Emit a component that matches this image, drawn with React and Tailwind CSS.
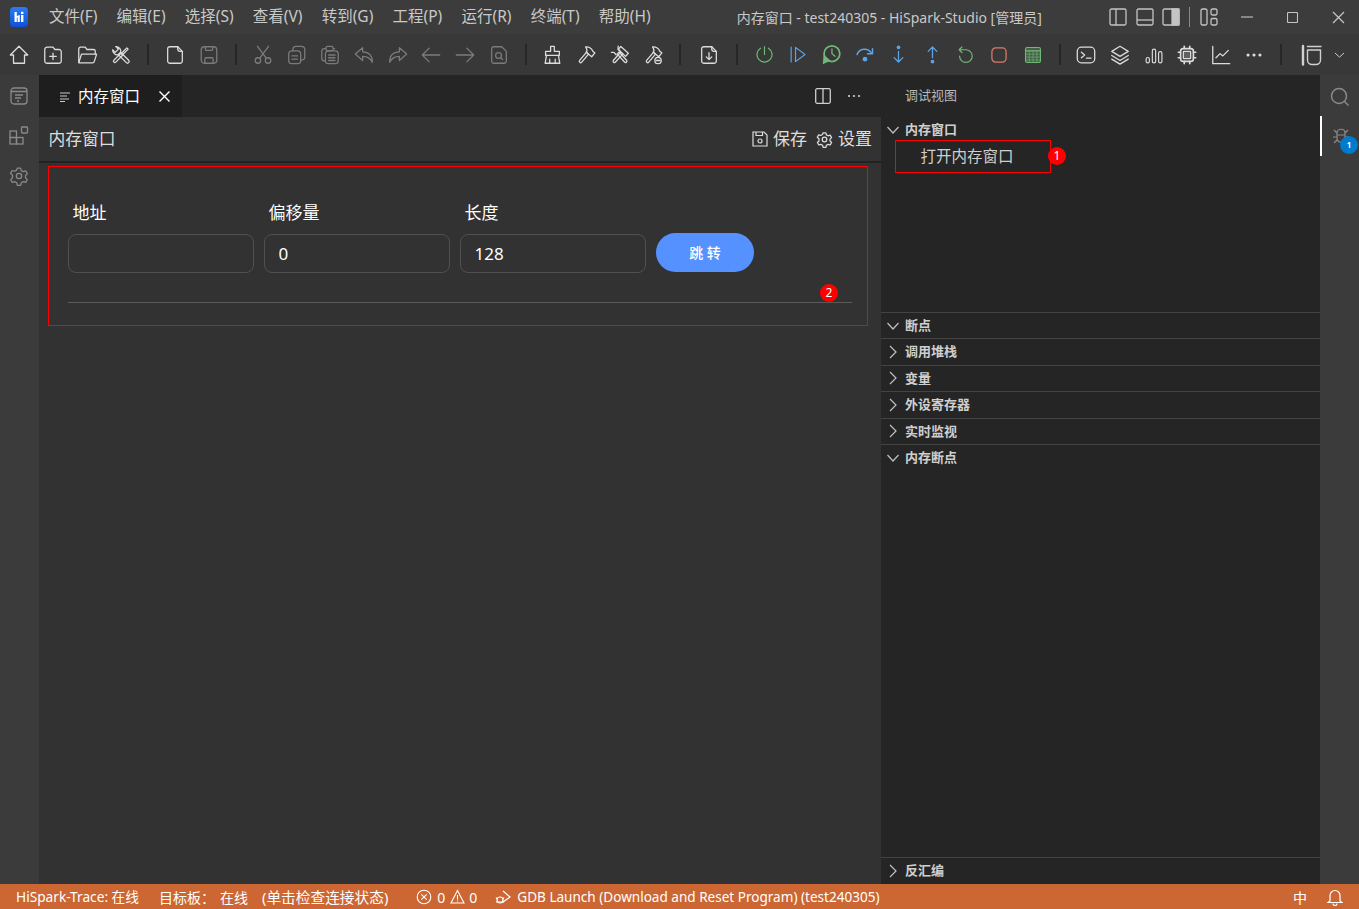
import React from "react";

const W = "#dcdcdc", D = "#7b7b7b", G = "#71b877", B = "#5aa5ea", R = "#dd7a66";

function S({ c = W, s = 22, w = 1.4, children }) {
  return (
    <svg width={s} height={s} viewBox="0 0 24 24" fill="none" stroke={c} strokeWidth={w} strokeLinecap="round" strokeLinejoin="round">
      {children}
    </svg>
  );
}

const Doc = () => <path d="M6.5 3H15l5 5v10.5a2.5 2.5 0 0 1-2.5 2.5h-11A2.5 2.5 0 0 1 4 18.500v-13A2.500 2.500 0 0 1 6.500 3z" />;

const hammer = (
  <g transform="rotate(40 12 12)">
    <path d="M10.500 9.500h3V21a1.500 1.500 0 0 1-3 0z" />
    <path d="M6 5.500c2-2.500 6-3 9-1.500h3v5.500h-8V8C9 6.500 7.500 6 6 5.500z" />
  </g>
);

const icons = {
  home: c => <S c={c}><path d="M12 2.500 21.500 12H18v9H6v-9H2.500z" /></S>,
  newFolder: c => <S c={c}><path d="M6 3.500h6l2 2.500h4.500A2.500 2.500 0 0 1 21 8.500v10a2.500 2.500 0 0 1-2.500 2.500h-13A2.500 2.500 0 0 1 3 18.500V6a2.500 2.500 0 0 1 3-2.500z" /><path d="M12 10v7M8.500 13.500h7" /></S>,
  folder: c => <S c={c}><path d="M3 20V5.500A2 2 0 0 1 5 3.500h5l2 2.500h7a2 2 0 0 1 2 2V11" /><path d="M3 20.500 6 11h16.500l-2.500 8a2 2 0 0 1-2 1.500z" /></S>,
  tools: c => <S c={c}>
    <g transform="rotate(-45 12 12)"><path d="M10.200 9.500h3.600V22a1.800 1.800 0 0 1-3.600 0z" /><path d="M10.200 9.500C7.500 8.500 7 4 9.500 1.500v4h5v-4C17 4 16.500 8.500 13.800 9.500" /></g>
    <g transform="rotate(45 12 12)"><path d="M10.500 11h3v10.500a1.500 1.500 0 0 1-3 0z" /><path d="M11 11V2h2v9" /></g>
  </S>,
  file: c => <S c={c}><Doc /><path d="M15 3v2.500A2.500 2.500 0 0 0 17.500 8H20" /></S>,
  save: c => <S c={c}><rect x="3.500" y="3" width="17" height="18" rx="3.500" /><path d="M8 3v2.500A1.500 1.500 0 0 0 9.500 7h5A1.500 1.500 0 0 0 16 5.500V3M7.500 21v-4.500a1.500 1.500 0 0 1 1.500-1.500h6a1.500 1.500 0 0 1 1.500 1.500V21" /></S>,
  cut: c => <S c={c}><circle cx="6.500" cy="18" r="3" /><circle cx="17.500" cy="18" r="3" /><path d="M8.500 15.500 18 2.500M15.500 15.500 6 2.500" /></S>,
  copy: c => <S c={c}><rect x="3" y="7.500" width="13" height="14" rx="3.500" /><path d="M7.500 7.500V6A3.500 3.500 0 0 1 11 2.500h6A3.500 3.500 0 0 1 20.500 6v8a3.500 3.500 0 0 1-3.500 3.500h-1M6.500 13h6M6.500 16.500h6" /></S>,
  paste: c => <S c={c}><path d="M6 18.500A3 3 0 0 1 3 15.500V8a3 3 0 0 1 3-3h1.500M16 5h1" /><rect x="7.500" y="2.500" width="8" height="5" rx="2" /><rect x="7" y="7.500" width="14" height="14" rx="3.500" /><path d="M10.500 12h7M10.500 15h7M10.500 18h7" /></S>,
  undo: c => <S c={c}><path d="M10.500 4 2.500 11l8 7v-4.500c5 0 8.500 2 10.500 6.500.5-7-3.500-11.500-10.500-11.500z" /></S>,
  redo: c => <S c={c}><path d="M13.500 4 21.500 11l-8 7v-4.500c-5 0-8.500 2-10.500 6.500-.5-7 3.500-11.500 10.500-11.500z" /></S>,
  left: c => <S c={c}><path d="M21.500 12h-19M10 4.500 2.500 12l7.500 7.500" /></S>,
  right: c => <S c={c}><path d="M2.500 12h19M14 4.500l7.500 7.500-7.500 7.500" /></S>,
  find: c => <S c={c}><Doc /><circle cx="11.500" cy="12.500" r="3.200" /><path d="m14 15 2 2" /></S>,
  broom: c => <S c={c}><path d="M10.500 2.500h4V8H20v4.500H5V8h5.500z" /><path d="M6 12.500 4.500 21h16L19 12.500M9.500 21v-4.500M15.500 21v-4.500" /></S>,
  hammer: c => <S c={c}>{hammer}</S>,
  hammerWrench: c => <S c={c}>
    <g transform="rotate(-42 12 12)"><path d="M10.500 9h3v12a1.500 1.500 0 0 1-3 0z" /><path d="M9 9V5.500L7 3.500M15 9V5.500l2-2" /></g>
    <g transform="rotate(42 12 12)"><path d="M10.500 9h3v12a1.500 1.500 0 0 1-3 0z" /><path d="M6.500 4.500h11v4.500h-11z" /></g>
  </S>,
  hammerMinus: c => <S c={c}>{hammer}<circle cx="17.500" cy="18" r="3.500" fill="#383838" /><path d="M15.500 18h4" /></S>,
  download: c => <S c={c}><Doc /><path d="M15 3v2.500A2.500 2.500 0 0 0 17.500 8H20M12 9.500v7.500M9 14l3 3 3-3" /></S>,
  power: c => <S c={c} s={19} w={1.500}><path d="M12 2V12M7 4a9.500 9.500 0 1 0 10 0" /></S>,
  cont: c => <S c={c} s={19} w={1.500}><path d="M4 2.500v19M9.500 3 21.500 12 9.500 21z" /></S>,
  clock: c => <S c={c} s={21} w={2}><circle cx="12.500" cy="11" r="9" /><path d="M12.500 5.500V11l3.500 3" strokeWidth="1.500" /><path d="M2 23l1-11 8 7z" fill={c} stroke="none" /></S>,
  over: c => <S c={c} s={20} w={1.800}><path d="M2.500 11.500a9.500 9.500 0 0 1 17-2" /><path d="M21 4.500v6h-6" /><circle cx="12" cy="17" r="2.800" fill={c} stroke="none" /></S>,
  into: c => <S c={c} s={19} w={1.600}><circle cx="12" cy="3" r="2.300" fill={c} stroke="none" /><path d="M12 8v13.500M6.500 16l5.500 5.500 5.500-5.500" /></S>,
  out: c => <S c={c} s={19} w={1.600}><circle cx="12" cy="21" r="2.300" fill={c} stroke="none" /><path d="M12 16V2.500M6.500 8 12 2.500 17.500 8" /></S>,
  restart: c => <S c={c} s={19} w={1.500}><path d="M7.500 2.500 4 6l3.500 3.500M4 6h8.500a8 8 0 1 1-8 8" /></S>,
  stop: c => <S c={c} s={20} w={1.500}><rect x="3.500" y="3.500" width="17" height="17" rx="4.500" /></S>,
  calc: c => <S c={c} s={20} w={1.300}><rect x="3" y="3" width="18" height="18" rx="2" fill="#46604a" /><path d="M3 7h18" strokeWidth="1.600" /><path d="M3 11h18M3 14.500h18M3 18h18M7.500 7.500V21M12 7.500V21M16.500 7.500V21" strokeWidth="0.700" /></S>,
  term: c => <S c={c}><rect x="2.500" y="3.500" width="19" height="17" rx="4.500" /><path d="m7 9 3.500 3L7 15M12.500 15.500h5" /></S>,
  layers: c => <S c={c}><path d="M12 2.500 21 8l-9 5.500L3 8zM3 12.500l9 5.500 9-5.500M3 16.500l9 5.500 9-5.500" /></S>,
  bars: c => <S c={c} s={20}><rect x="2.500" y="15" width="4" height="6.500" rx="2" /><rect x="10" y="5" width="4" height="16.500" rx="2" /><rect x="17.500" y="8" width="4" height="13.500" rx="2" /></S>,
  chip: c => <S c={c}><rect x="5" y="5" width="14" height="14" rx="3" strokeWidth="1.800" /><rect x="8" y="8" width="8" height="8" rx="0.500" fill={c} fillOpacity="0.250" /><path d="M9 2.500V5M15 2.500V5M9 19v2.500M15 19v2.500M2.500 9H5M2.500 15H5M19 9h2.500M19 15h2.500" strokeWidth="1.800" /></S>,
  chart: c => <S c={c}><path d="M3 2.500V21.500H21.500" /><path d="m6.500 15 4.500-4.500 3 2.500 6-6" /></S>,
  dots: c => <S c={c}><g fill={c} stroke="none"><circle cx="5.500" cy="12" r="1.700" /><circle cx="12" cy="12" r="1.700" /><circle cx="18.500" cy="12" r="1.700" /></g></S>,
  panel: c => <S c={c} s={24}><path d="M4 3v18.500" strokeWidth="2.400" /><path d="M8.500 3.500H22M8.500 7h13v10a4.500 4.500 0 0 1-4.500 4.500h-4A4.500 4.500 0 0 1 8.500 17z" /></S>,
  chev: c => <S c={c} s={20}><path d="m6 9.500 6 5.500 6-5.500" /></S>,
};

const groups = [
  { w: "w-[34px]", items: [["home", W], ["newFolder", W], ["folder", W], ["tools", W]] },
  { w: "w-[34px]", items: [["file", W], ["save", D]] },
  { w: "w-[33.7px]", items: [["cut", D], ["copy", D], ["paste", D], ["undo", D], ["redo", D], ["left", D], ["right", D], ["find", D]] },
  { w: "w-[33.7px]", items: [["broom", W], ["hammer", W], ["hammerWrench", W], ["hammerMinus", W]] },
  { w: "w-[37px]", items: [["download", W]] },
  { w: "w-[33.6px]", items: [["power", G], ["cont", B], ["clock", G], ["over", B], ["into", B], ["out", B], ["restart", G], ["stop", R], ["calc", G]] },
  { w: "w-[33.6px]", items: [["term", W], ["layers", W], ["bars", W], ["chip", W], ["chart", W], ["dots", W]] },
];

const menus = ["文件(F)", "编辑(E)", "选择(S)", "查看(V)", "转到(G)", "工程(P)", "运行(R)", "终端(T)", "帮助(H)"];

function Toolbar() {
  return (
    <div className="flex h-[41px] items-center bg-[#383838] pl-[2px]">
      {groups.map((g, i) => (
        <React.Fragment key={i}>
          {g.items.map(([n, c], j) => (
            <div key={j} className={`flex shrink-0 items-center justify-center ${g.w}`}>{icons[n](c)}</div>
          ))}
          <div className="flex w-[20px] shrink-0 justify-center"><div className="h-[21px] w-[2px] bg-[#262626]" /></div>
        </React.Fragment>
      ))}
      <div className="flex w-[40px] shrink-0 justify-center">{icons.panel("#d0d0d0")}</div>
      <div className="flex w-[17px] shrink-0 justify-center">{icons.chev("#d0d0d0")}</div>
    </div>
  );
}

function TitleBar() {
  return (
    <div className="flex h-[34px] items-center bg-[#3c3c3c] text-[#c9c9c9]">
      <svg className="ml-[10px] shrink-0" width="18" height="20" viewBox="0 0 18 20">
        <defs>
          <linearGradient id="lg" x1="0" y1="0" x2="0" y2="1">
            <stop offset="0" stopColor="#2b7cf2" />
            <stop offset="1" stopColor="#0f4fd8" />
          </linearGradient>
        </defs>
        <rect width="18" height="20" rx="4" fill="url(#lg)" />
        <path d="M4.500 5h2.300v4l3-1v-3h0v10h-2.200v-4.500l-.8.3V15H4.500z" fill="#fff" />
        <rect x="11" y="8" width="2.400" height="7" fill="#fff" />
        <rect x="11" y="4.800" width="2.400" height="2.200" fill="#fff" />
      </svg>
      <div className="ml-[21px] flex gap-[19.250px] text-[15.500px]">
        {menus.map(m => <span key={m} className="whitespace-nowrap">{m}</span>)}
      </div>
      <div className="ml-[86px] whitespace-nowrap text-[14px]">内存窗口 - test240305 - HiSpark-Studio [管理员]</div>
      <div className="ml-auto flex items-center text-[#c4c4c4]">
        <svg width="18" height="18" viewBox="0 0 18 18" fill="none" stroke="currentColor" strokeWidth="1.300"><rect x="1" y="1" width="16" height="16" rx="1.500" /><path d="M7 1v16" /></svg>
        <svg className="ml-[9px]" width="18" height="18" viewBox="0 0 18 18" fill="none" stroke="currentColor" strokeWidth="1.300"><rect x="1" y="1" width="16" height="16" rx="1.500" /><path d="M1 12h16" /></svg>
        <svg className="ml-[8px]" width="18" height="18" viewBox="0 0 18 18" fill="none" stroke="currentColor" strokeWidth="1.300"><rect x="1" y="1" width="16" height="16" rx="1.500" /><rect x="10" y="1" width="7" height="16" fill="currentColor" /></svg>
        <div className="ml-[9px] h-[20px] w-px bg-[#8a8a8a]" />
        <svg className="ml-[10px]" width="18" height="18" viewBox="0 0 18 18" fill="none" stroke="currentColor" strokeWidth="1.300"><rect x="1" y="1" width="6" height="16" rx="1.500" /><rect x="11" y="1" width="6" height="6" rx="1.500" /><rect x="11" y="10.500" width="6" height="6.500" rx="1.500" /></svg>
        <svg className="ml-[23px]" width="12" height="12" viewBox="0 0 12 12" stroke="currentColor" strokeWidth="1.100"><path d="M0 6h12" /></svg>
        <svg className="ml-[34px]" width="11" height="11" viewBox="0 0 11 11" fill="none" stroke="currentColor" strokeWidth="1.100"><rect x="0.500" y="0.500" width="10" height="10" rx="1" /></svg>
        <svg className="ml-[34px] mr-[14px]" width="13" height="13" viewBox="0 0 13 13" stroke="currentColor" strokeWidth="1.300"><path d="m1 1 11 11M12 1 1 12" /></svg>
      </div>
    </div>
  );
}

function LeftBar() {
  return (
    <div className="flex w-[39px] shrink-0 flex-col items-center gap-[20px] bg-[#3b3b3b] pr-[1px] pt-[11px] text-[#8a8a8a]">
      <svg width="20" height="20" viewBox="0 0 20 20" fill="none" stroke="currentColor" strokeWidth="1.300"><rect x="2" y="2" width="16" height="16" rx="3" /><path d="M2 5.500h16M6 9h8M6 12h6M8 15h2" /></svg>
      <svg width="20" height="20" viewBox="0 0 20 20" fill="none" stroke="currentColor" strokeWidth="1.300"><rect x="1" y="5" width="6.500" height="6.500" /><rect x="1" y="11.500" width="6.500" height="6.500" /><rect x="7.500" y="11.500" width="6.500" height="6.500" /><rect x="12.500" y="1" width="6" height="6" rx="0.800" /></svg>
      <svg width="20" height="20" viewBox="0 0 24 24" fill="none" stroke="currentColor" strokeWidth="1.500" strokeLinejoin="round"><path d="M10 2.500h4l.7 3 2.300 1.300 3-.9 2 3.400-2.200 2.200v2.600l2.200 2.200-2 3.400-3-.9-2.300 1.300-.7 3h-4l-.7-3-2.300-1.300-3 .9-2-3.400 2.200-2.200V11L1.800 8.800l2-3.400 3 .9 2.300-1.300z" /><circle cx="12" cy="12" r="3.200" /></svg>
    </div>
  );
}

function Field({ label, value }) {
  return (
    <div className="flex w-[186px] flex-col">
      <div className="h-[24px] pl-[4.500px] text-[17px] leading-[26px] text-white">{label}</div>
      <input
        readOnly
        value={value}
        className="mt-[10px] h-[39px] w-full rounded-[8px] border border-[#505050] bg-transparent px-[13.500px] text-[17px] text-white outline-none"
      />
    </div>
  );
}

function Editor() {
  return (
    <div className="flex w-[842px] shrink-0 flex-col bg-[#323232]">
      <div className="flex h-[42px] bg-[#252525]">
        <div className="flex w-[143px] items-center bg-[#1e1e1e] pl-[21px] pt-[1px] text-white">
          <svg width="10" height="10" viewBox="0 0 10 10" stroke="#c8c8c8" strokeWidth="1.200"><path d="M0 1h10M0 4h7M0 7h9M0 9.500h5" /></svg>
          <span className="ml-[8px] text-[15.500px] whitespace-nowrap">内存窗口</span>
          <svg className="ml-[19px]" width="11" height="11" viewBox="0 0 11 11" stroke="#fff" strokeWidth="1.400"><path d="m0.500 0.500 10 10M10.500 0.500l-10 10" /></svg>
        </div>
        <div className="ml-auto flex items-center pr-[20px]">
          <svg width="16" height="16" viewBox="0 0 16 16" fill="none" stroke="#cfcfcf" strokeWidth="1.300"><rect x="0.700" y="0.700" width="14.600" height="14.600" rx="1.500" /><path d="M8 0.700v14.600" /></svg>
          <svg className="ml-[16px]" width="14" height="4" viewBox="0 0 14 4" fill="#cfcfcf"><circle cx="2" cy="2" r="1.100" /><circle cx="7" cy="2" r="1.100" /><circle cx="12" cy="2" r="1.100" /></svg>
        </div>
      </div>
      <div className="flex h-[44px] items-center pl-[9.500px] pr-[9px] text-[#dedede]">
        <span className="text-[16.750px] whitespace-nowrap">内存窗口</span>
        <div className="ml-auto flex items-center text-[17px]">
          <svg width="16" height="16" viewBox="0 0 16 16" fill="none" stroke="#dcdcdc" strokeWidth="1.200"><path d="M1 1h11l3 3v11H1z" /><path d="M4 1v3.500h6.500V1" /><circle cx="8" cy="10" r="2" /></svg>
          <span className="ml-[5px] whitespace-nowrap">保存</span>
          <svg className="ml-[9px]" width="17" height="17" viewBox="0 0 24 24" fill="none" stroke="#dcdcdc" strokeWidth="1.800" strokeLinejoin="round"><path d="M10 2.500h4l.7 3 2.300 1.300 3-.9 2 3.400-2.200 2.200v2.600l2.200 2.200-2 3.400-3-.9-2.300 1.300-.7 3h-4l-.7-3-2.300-1.300-3 .9-2-3.400 2.200-2.200V11L1.800 8.800l2-3.400 3 .9 2.300-1.300z" /><circle cx="12" cy="12" r="3.200" /></svg>
          <span className="ml-[5px] whitespace-nowrap">设置</span>
        </div>
      </div>
      <div className="h-[2px] bg-[#222222]" />
      <div className="relative ml-[9px] mt-[3px] w-[820px] border border-[#ff0000] pb-[22px] pl-[19px] pr-[15px] pt-[33px]">
        <div className="flex items-end gap-[10px]">
          <Field label="地址" value="" />
          <Field label="偏移量" value="0" />
          <Field label="长度" value="128" />
          <button className="mb-[1px] h-[39px] w-[98px] rounded-full bg-[#5591ff] text-[14px] font-medium text-white">跳&nbsp;转</button>
        </div>
        <div className="mt-[29px] h-px bg-[#5a5a5a]" />
        <div className="absolute left-[771px] top-[117px] flex h-[18px] w-[18px] items-center justify-center rounded-full bg-[#ff0000] text-[12px] text-white">2</div>
      </div>
    </div>
  );
}

function Chev({ open }) {
  return (
    <svg className="ml-[4px] shrink-0" width="16" height="16" viewBox="0 0 16 16" fill="none" stroke="#c0c0c0" strokeWidth="1.200">
      {open ? <path d="m2.500 5 5.500 6 5.500-6" /> : <path d="m5 2 6 6-6 6" />}
    </svg>
  );
}

function Head({ label, open, line = true, h = "h-[26.400px]" }) {
  return (
    <div className={`flex shrink-0 items-center ${h} ${line ? "border-t border-[#434343]" : ""}`}>
      <Chev open={open} />
      <span className="ml-[4px] text-[13px] font-semibold text-[#cfcfcf]">{label}</span>
    </div>
  );
}

function DebugPanel() {
  return (
    <div className="flex w-[439px] shrink-0 flex-col bg-[#252525]">
      <div className="flex h-[42px] shrink-0 items-center pl-[24px] text-[13px] text-[#b8b8b8]">调试视图</div>
      <div className="relative h-[195px] shrink-0">
        <Head label="内存窗口" open line={false} />
        <div className="ml-[14px] -mt-[3px] flex h-[33px] w-[156px] items-center border border-[#ff0000] pl-[24.500px] text-[15.500px] whitespace-nowrap text-[#cfcfcf]">打开内存窗口</div>
        <div className="absolute left-[167px] top-[30px] flex h-[18px] w-[18px] items-center justify-center rounded-full bg-[#ff0000] text-[12px] text-white">1</div>
      </div>
      <Head label="断点" open />
      <Head label="调用堆栈" />
      <Head label="变量" />
      <Head label="外设寄存器" />
      <Head label="实时监视" />
      <Head label="内存断点" open />
      <div className="flex-1" />
      <Head label="反汇编" h="h-[27px]" />
    </div>
  );
}

function RightBar() {
  return (
    <div className="flex flex-1 flex-col bg-[#3b3b3b]">
      <div className="flex h-[41px] items-center justify-center pt-[2px]">
        <svg width="20" height="20" viewBox="0 0 20 20" fill="none" stroke="#8a8a8a" strokeWidth="1.500"><circle cx="9" cy="9" r="7.500" /><path d="m14.500 14.500 4 4" /></svg>
      </div>
      <div className="relative flex h-[40px] items-center justify-center border-l-2 border-white">
        <svg width="20" height="20" viewBox="0 0 20 20" fill="none" stroke="#8a8a8a" strokeWidth="1.200"><path d="M6 7c0-5 8-5 8 0v5c0 5.500-8 5.500-8 0zM6 9h8M6 7 3 4M14 7l3-3M6 11H2M14 11h4M6 14l-3 3M14 14l3 3" /></svg>
        <div className="absolute left-[18px] top-[20px] flex h-[18px] w-[18px] items-center justify-center rounded-full bg-[#007acc] text-[8px] font-bold text-white">1</div>
      </div>
    </div>
  );
}

function StatusBar() {
  return (
    <div className="flex h-[25px] items-center bg-[#cc6633] pl-[16px] pt-[1px] text-[14px] whitespace-nowrap text-white">
      <span className="text-[13.700px]">HiSpark-Trace: 在线</span>
      <span className="ml-[20px]">目标板：</span>
      <span className="ml-[5px]">在线</span>
      <span className="ml-[14px] text-[14.700px]">(单击检查连接状态)</span>
      <svg className="ml-[28px]" width="16" height="16" viewBox="0 0 16 16" fill="none" stroke="#fff" strokeWidth="1.100"><circle cx="8" cy="8" r="6.800" /><path d="m5.300 5.300 5.400 5.400M10.700 5.300l-5.400 5.400" /></svg>
      <span className="ml-[5px]">0</span>
      <svg className="ml-[5px]" width="15" height="16" viewBox="0 0 15 16" fill="none" stroke="#fff" strokeWidth="1.100"><path d="M7.500 1.500 14 14H1zM7.500 6v4.500M7.500 11.500v1" /></svg>
      <span className="ml-[4px]">0</span>
      <svg className="ml-[18px]" width="17" height="17" viewBox="0 0 17 17" fill="none" stroke="#fff" strokeWidth="1.200"><path d="m8 2 7 6-7 5" /><circle cx="5" cy="11" r="3" /><path d="M1 13h8M2 10l-1-1.500M8 10l1-1.500" /></svg>
      <span className="ml-[5px] text-[13.550px]">GDB Launch (Download and Reset Program) (test240305)</span>
      <span className="ml-auto">中</span>
      <svg className="ml-[20px] mr-[16px]" width="16" height="17" viewBox="0 0 16 17" fill="none" stroke="#fff" strokeWidth="1.200"><path d="M3 12V6.500a5 5 0 0 1 10 0V12l2 1.500H1zM6 14.500a2 2 0 0 0 4 0" /></svg>
    </div>
  );
}

export default function App() {
  return (
    <div className="flex h-[909px] w-[1359px] flex-col overflow-hidden bg-[#323232] font-['Noto_Sans','Noto_Sans_CJK_SC',sans-serif]">
      <TitleBar />
      <Toolbar />
      <div className="flex min-h-0 flex-1">
        <LeftBar />
        <Editor />
        <DebugPanel />
        <RightBar />
      </div>
      <StatusBar />
    </div>
  );
}
